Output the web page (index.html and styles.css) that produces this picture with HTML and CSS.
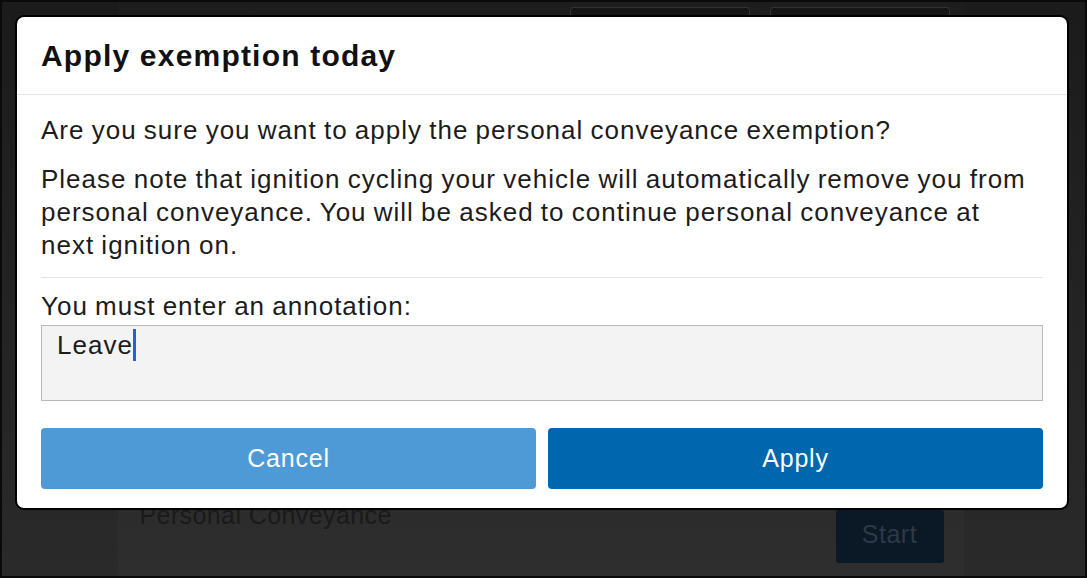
FILE: index.html
```html
<!DOCTYPE html>
<html lang="en">
<head>
<meta charset="utf-8">
<title>Apply exemption today</title>
<link rel="stylesheet" href="styles.css">
</head>
<body>
<div class="screen">
  <div class="page">
    <div class="page-top">
      <div class="ghost-btn"></div>
      <div class="ghost-btn"></div>
    </div>
    <div class="page-bottom">
      <span class="pc-label">Personal Conveyance</span>
      <span class="start-btn">Start</span>
    </div>
  </div>

  <div class="modal">
    <div class="modal-header">
      <h1 class="modal-title">Apply exemption today</h1>
    </div>
    <div class="modal-body">
      <p class="msg">Are you sure you want to apply the personal conveyance exemption?</p>
      <p class="msg">Please note that ignition cycling your vehicle will automatically remove you from personal conveyance. You will be asked to continue personal conveyance at next ignition on.</p>
      <div class="rule"></div>
      <label class="field-label">You must enter an annotation:</label>
      <div class="textarea"><span class="typed">Leave</span><span class="caret"></span></div>
      <div class="actions">
        <button class="btn btn-cancel">Cancel</button>
        <button class="btn btn-apply">Apply</button>
      </div>
    </div>
  </div>
</div>
</body>
</html>
```

FILE: styles.css
```css
* { box-sizing: border-box; }
html, body {
  margin: 0;
  padding: 0;
  width: 1087px;
  height: 578px;
  overflow: hidden;
  background: #000;
  font-family: "Liberation Sans", Arial, Helvetica, sans-serif;
}
.screen {
  position: relative;
  width: 1087px;
  height: 578px;
  border: 2px solid #0a0a0a;
  background: linear-gradient(#1b1b1b, #2a2a2a);
  display: flex;
  justify-content: center;
  overflow: hidden;
}
.page {
  width: 846px;
  margin-left: -6px;
  display: flex;
  flex-direction: column;
  justify-content: space-between;
  background: linear-gradient(#1d1d1d, #2e2e2e);
}
.page-top {
  display: flex;
  justify-content: flex-end;
  gap: 20px;
  padding: 5px 14px 0 0;
}
.ghost-btn {
  width: 180px;
  height: 12px;
  border: 1px solid #333;
  border-bottom: none;
  border-radius: 4px 4px 0 0;
  background: #161616;
}
.page-bottom {
  display: flex;
  justify-content: space-between;
  align-items: flex-start;
  padding: 0 20px 13px 22px;
}
.pc-label {
  color: #1a1a1a;
  font-size: 25px;
  letter-spacing: 0.4px;
  margin-top: -9px;
}
.start-btn {
  width: 108px;
  height: 53px;
  background: #0b1826;
  color: #2d3946;
  border-radius: 3px;
  font-size: 25px;
  letter-spacing: 0.5px;
  display: flex;
  align-items: center;
  justify-content: center;
  padding-bottom: 4px;
}
.modal {
  position: absolute;
  left: 15px;
  top: 15px;
  width: 1050px;
  height: 491px;
  background: #fff;
  border-radius: 7px;
  box-shadow: 0 0 0 2px #000;
}
.modal-header {
  height: 78px;
  border-bottom: 1px solid #e4e4e4;
  padding: 0 24px;
  display: flex;
  align-items: center;
}
.modal-title {
  margin: 0;
  font-size: 30px;
  letter-spacing: 1.2px;
  font-weight: bold;
  color: #111;
}
.modal-body {
  padding: 19px 24px 0 24px;
}
.msg {
  margin: 0 0 16px 0;
  padding-right: 12px;
  font-size: 26px;
  letter-spacing: 1px;
  word-spacing: -1px;
  line-height: 33px;
  color: #1c1c1c;
}
.rule {
  height: 1px;
  background: #e4e4e4;
  margin: -1px 0 12px 0;
}
.field-label {
  display: block;
  font-size: 26px;
  letter-spacing: 1px;
  word-spacing: -1px;
  line-height: 32px;
  color: #1c1c1c;
}
.textarea {
  height: 76px;
  margin-top: 3px;
  background: #f3f3f3;
  border: 1px solid #b9b9b9;
  padding: 3px 15px;
  font-size: 26px;
  letter-spacing: 1px;
  line-height: 32px;
  color: #1c1c1c;
  display: flex;
  align-items: flex-start;
}
.caret {
  width: 3px;
  height: 32px;
  background: #2f5bd8;
}
.actions {
  display: flex;
  gap: 12px;
  margin-top: 27px;
}
.btn {
  flex: 1;
  height: 61px;
  border: none;
  border-radius: 4px;
  color: #fff;
  font-family: inherit;
  font-size: 25px;
  letter-spacing: 0.8px;
}
.btn-cancel { background: #4e9ad6; }
.btn-apply { background: #0066ad; }
```
